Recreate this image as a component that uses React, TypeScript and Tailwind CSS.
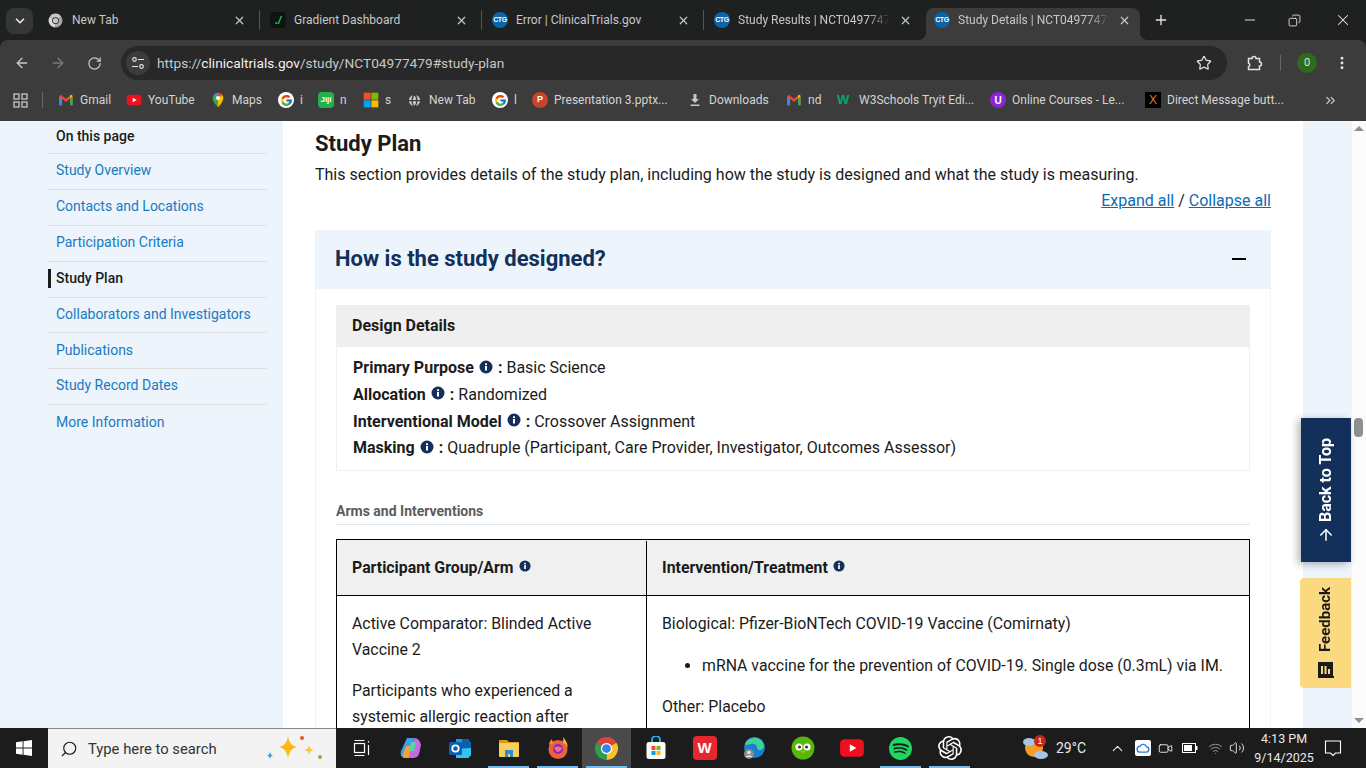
import {
  ArrowLeft,
  ArrowRight,
  ArrowUp,
  ChevronDown,
  ChevronUp,
  ChevronsRight,
  Copy,
  EllipsisVertical,
  Globe,
  Minus,
  Plus,
  RotateCw,
  Search,
  Star,
  Video,
  Volume2,
  Wifi,
  X,
} from "lucide-react";
import { FcGoogle } from "react-icons/fc";
import { SiOpenai, SiSpotify } from "react-icons/si";

const uiFont = "font-['Roboto',sans-serif]";

function ChromeLogo({ size = 24, mono = false }: { size?: number; mono?: boolean }) {
  return (
    <svg width={size} height={size} viewBox="0 0 24 24">
      <path d="M12 12 2.47 6.5A11 11 0 0 1 21.53 6.5Z" fill={mono ? "#c7c7c7" : "#db4437"} />
      <path d="M12 12 21.53 6.5A11 11 0 0 1 12 23Z" fill={mono ? "#a8a8a8" : "#fbc02d"} />
      <path d="M12 12 12 23A11 11 0 0 1 2.47 6.5Z" fill={mono ? "#d8d8d8" : "#2e9e4f"} />
      <circle cx="12" cy="12" r="5.4" fill={mono ? "#1f2020" : "#fff"} />
      <circle cx="12" cy="12" r="4.2" fill={mono ? "#c7c7c7" : "#3b82e6"} />
    </svg>
  );
}

function CtgIcon() {
  return (
    <span className="flex h-4 w-4 shrink-0 items-center justify-center rounded-full bg-[#0b64a8] font-['Liberation_Sans',sans-serif] text-[7px] font-bold tracking-tighter text-white">
      CTG
    </span>
  );
}

function GradientIcon() {
  return (
    <span className="flex h-4 w-4 shrink-0 items-center justify-center rounded-sm bg-[#0d1512] font-['Liberation_Sans',sans-serif] text-[11px] font-bold italic text-[#22c55e]">
      ./
    </span>
  );
}

function GmailIcon() {
  return (
    <svg width="16" height="16" viewBox="0 0 24 24">
      <path d="M2 6v14h4V10l6 5 6-5v10h4V6l-2-2-8 6-8-6Z" fill="#ea4335" />
      <path d="M2 6v14h4V10Z" fill="#4285f4" />
      <path d="M18 10v10h4V6Z" fill="#34a853" />
      <path d="M18 10l4-4-2-2-2 1.500Z" fill="#fbbc04" />
    </svg>
  );
}

function YoutubeIcon({ size = 16 }: { size?: number }) {
  return (
    <svg width={size} height={size} viewBox="0 0 24 24">
      <rect x="1" y="4" width="22" height="16" rx="4" fill="#f00f1f" />
      <path d="M10 8.500v7l6-3.500Z" fill="#fff" />
    </svg>
  );
}

function MapsIcon() {
  return (
    <svg width="16" height="16" viewBox="0 0 24 24">
      <path d="M12 1a8 8 0 0 0-8 8c0 6 8 14 8 14Z" fill="#34a853" />
      <path d="M12 1a8 8 0 0 1 8 8c0 6-8 14-8 14Z" fill="#fbbc04" />
      <path d="M6 3.500 12 9V1a8 8 0 0 0-6 2.500Z" fill="#4285f4" />
      <path d="M12 1a8 8 0 0 1 6.500 3.500L12 9Z" fill="#ea4335" />
      <circle cx="12" cy="9" r="3" fill="#fff" />
    </svg>
  );
}

function MsIcon({ size = 16 }: { size?: number }) {
  return (
    <svg width={size} height={size} viewBox="0 0 24 24">
      <rect x="1" y="1" width="10.500" height="10.500" fill="#f25022" />
      <rect x="12.500" y="1" width="10.500" height="10.500" fill="#7fba00" />
      <rect x="1" y="12.500" width="10.500" height="10.500" fill="#00a4ef" />
      <rect x="12.500" y="12.500" width="10.500" height="10.500" fill="#ffb900" />
    </svg>
  );
}

function GBadge() {
  return (
    <span className="flex h-4 w-4 items-center justify-center rounded-full bg-white">
      <FcGoogle size={13} />
    </span>
  );
}

const bookmarks = [
  { label: "Gmail", width: "w-[68px]", icon: <GmailIcon /> },
  { label: "YouTube", width: "w-[84px]", icon: <YoutubeIcon /> },
  { label: "Maps", width: "w-[68px]", icon: <MapsIcon /> },
  { label: "i", width: "w-[40px]", icon: <GBadge /> },
  {
    label: "n",
    width: "w-[45px]",
    icon: (
      <span className="flex h-4 w-4 items-center justify-center rounded-sm bg-[#22b14c] font-['Liberation_Sans',sans-serif] text-[8px] font-bold text-white">
        Jiji
      </span>
    ),
  },
  { label: "s", width: "w-[44px]", icon: <MsIcon /> },
  { label: "New Tab", width: "w-[85px]", icon: <Globe size={15} className="text-[#3c3c3c]" fill="#c7c7c7" /> },
  { label: "l", width: "w-[40px]", icon: <GBadge /> },
  {
    label: "Presentation 3.pptx...",
    width: "w-[155px]",
    icon: (
      <span className="flex h-4 w-4 items-center justify-center rounded-full bg-[#c8442a] font-['Liberation_Sans',sans-serif] text-[9px] font-bold text-white">
        P
      </span>
    ),
  },
  {
    label: "Downloads",
    width: "w-[99px]",
    icon: (
      <svg width="16" height="16" viewBox="0 0 16 16" fill="#c7c7c7">
        <path d="M6.500 2h3v5h2.500L8 11 4 7h2.500ZM3.500 12.500h9V14h-9Z" />
      </svg>
    ),
  },
  { label: "nd", width: "w-[51px]", icon: <GmailIcon /> },
  {
    label: "W3Schools Tryit Edi...",
    width: "w-[153px]",
    icon: <span className="w-4 font-['Liberation_Sans',sans-serif] text-[13px] font-bold text-[#04aa6d]">W</span>,
  },
  {
    label: "Online Courses - Le...",
    width: "w-[155px]",
    icon: (
      <span className="flex h-4 w-4 items-center justify-center rounded-full bg-[#8b25d6] font-['Liberation_Sans',sans-serif] text-[10px] font-bold text-white">
        U
      </span>
    ),
  },
  {
    label: "Direct Message butt...",
    width: "w-[160px]",
    icon: (
      <span className="flex h-4 w-4 items-center justify-center bg-black font-['Liberation_Sans',sans-serif] text-[12px] text-[#e07a1f]">
        X
      </span>
    ),
  },
];

const sections = [
  "Study Overview",
  "Contacts and Locations",
  "Participation Criteria",
  "Study Plan",
  "Collaborators and Investigators",
  "Publications",
  "Study Record Dates",
  "More Information",
];

const designRows = [
  { label: "Primary Purpose", value: "Basic Science" },
  { label: "Allocation", value: "Randomized" },
  { label: "Interventional Model", value: "Crossover Assignment" },
  { label: "Masking", value: "Quadruple (Participant, Care Provider, Investigator, Outcomes Assessor)" },
];

function InfoIcon({ size = 14 }: { size?: number }) {
  return (
    <svg width={size} height={size} viewBox="0 0 14 14" className="shrink-0">
      <circle cx="7" cy="7" r="6.500" fill="#12305a" />
      <rect x="6" y="6" width="2" height="4.500" fill="#fff" />
      <rect x="6" y="3.300" width="2" height="1.800" fill="#fff" />
    </svg>
  );
}

function Tab({ title, icon, active, fade }: { title: string; icon: React.ReactNode; active?: boolean; fade?: boolean }) {
  return (
    <div
      className={
        active
          ? "relative flex h-[32px] w-[214px] items-center rounded-t-lg bg-[#3c3c3c] pb-2 pl-2 pr-[9px]"
          : "flex h-[32px] w-[221px] items-center pb-2 pl-[10px] pr-[13px]"
      }
    >
      {active ? (
        <>
          <span className="absolute bottom-0 left-[-8px] h-2 w-2 bg-[radial-gradient(circle_at_0_0,transparent_8px,#3c3c3c_8px)]" />
          <span className="absolute bottom-0 right-[-8px] h-2 w-2 bg-[radial-gradient(circle_at_100%_0,transparent_8px,#3c3c3c_8px)]" />
        </>
      ) : null}
      <span className="flex w-6 shrink-0 items-center">{icon}</span>
      <span
        className={
          fade
            ? "w-[152px] overflow-hidden whitespace-nowrap text-xs text-[#c7c7c7] [mask-image:linear-gradient(90deg,#000_85%,transparent)]"
            : "w-[152px] overflow-hidden whitespace-nowrap text-xs text-[#c7c7c7]"
        }
      >
        {title}
      </span>
      <X size={13} strokeWidth={2.2} className="ml-auto text-[#c7c7c7]" />
    </div>
  );
}

function TabStrip() {
  return (
    <div className="flex h-[40px] items-end bg-[#1f2020]">
      <div className="mb-[6px] ml-[6px] mr-[5px] flex h-[26px] w-[27px] items-center justify-center rounded-lg bg-[#353636]">
        <ChevronDown size={14} strokeWidth={3} className="text-[#e3e3e3]" />
      </div>
      <Tab title="New Tab" icon={<ChromeLogo size={15} mono />} />
      <div className="mb-[10px] h-5 w-px shrink-0 bg-[#555]" />
      <Tab title="Gradient Dashboard" icon={<GradientIcon />} />
      <div className="mb-[10px] h-5 w-px shrink-0 bg-[#555]" />
      <Tab title="Error | ClinicalTrials.gov" icon={<CtgIcon />} />
      <div className="mb-[10px] h-5 w-px shrink-0 bg-[#555]" />
      <Tab title="Study Results | NCT04977479" icon={<CtgIcon />} fade />
      <div className="w-px shrink-0" />
      <Tab title="Study Details | NCT04977479" icon={<CtgIcon />} active fade />
      <Plus size={16} strokeWidth={2} className="mb-[12px] ml-[13px] text-[#e3e3e3]" />
      <div className="ml-auto mb-[11px] flex items-center text-[#e8e8e8]">
        <Minus size={16} strokeWidth={1.4} className="mr-[30px]" />
        <Copy size={13} strokeWidth={1.6} className="mr-[33px] -scale-x-100" />
        <X size={18} strokeWidth={1.4} className="mr-[14px]" />
      </div>
    </div>
  );
}

function Toolbar() {
  return (
    <div className="flex h-[40px] items-center rounded-t-lg bg-[#3c3c3c] pt-[6px]">
      <ArrowLeft size={16} className="ml-[14px] text-[#c7c7c7]" />
      <ArrowRight size={16} className="ml-[20px] text-[#7a7a7a]" />
      <RotateCw size={15} className="ml-[21px] text-[#c7c7c7]" />
      <div className="ml-[19px] flex h-[34px] w-[1106px] items-center rounded-full bg-[#282828] pl-[5px]">
        <span className="flex h-6 w-6 items-center justify-center rounded-full bg-[#3c3c3c]">
          <svg width="14" height="14" viewBox="0 0 14 14" fill="none" stroke="#e3e3e3" strokeWidth="1.200">
            <circle cx="3.500" cy="3.500" r="1.800" />
            <path d="M7 3.500h6M1 10.500h6" />
            <circle cx="10.500" cy="10.500" r="1.800" />
          </svg>
        </span>
        <span className="ml-[7px] text-[13.700px] text-[#c7c7c7]">
          https://<span className="text-[#f1f1f1]">clinicaltrials.gov</span>/study/NCT04977479#study-plan
        </span>
        <Star size={16} strokeWidth={1.8} className="ml-auto mr-[15px] text-[#e3e3e3]" />
      </div>
      <svg width="18" height="18" viewBox="0 0 18 18" fill="none" stroke="#e3e3e3" strokeWidth="1.500" className="ml-[19px]">
        <path d="M2.500 4.500h3.500a2 2 0 0 1 4 0h3.500V8a2 2 0 0 1 0 4v3.500H2.500v-2.700a1.900 1.900 0 0 0 0-3.600Z" />
      </svg>
      <div className="ml-[16px] h-[16px] w-px bg-[#666]" />
      <span className="ml-[16px] flex h-5 w-5 items-center justify-center rounded-full bg-[#2f6b1f] text-[11px] text-[#d8e8d0]">
        0
      </span>
      <EllipsisVertical size={16} strokeWidth={2.4} className="ml-[17px] text-[#e3e3e3]" />
    </div>
  );
}

function BookmarksBar() {
  return (
    <div className="flex h-[41px] items-center bg-[#3c3c3c] pb-[1px]">
      <svg width="15" height="15" viewBox="0 0 15 15" fill="none" stroke="#c7c7c7" strokeWidth="1.300" className="ml-[13px]">
        <rect x="1" y="1" width="5" height="5" />
        <rect x="9" y="1" width="5" height="5" />
        <rect x="1" y="9" width="5" height="5" />
        <rect x="9" y="9" width="5" height="5" />
      </svg>
      <div className="ml-[14px] mr-[15px] h-[16px] w-px bg-[#666]" />
      {bookmarks.map((bookmark) => (
        <div className={`flex shrink-0 items-center ${bookmark.width}`} key={bookmark.label + bookmark.width}>
          <span className="flex w-[22px] shrink-0 items-center">{bookmark.icon}</span>
          <span className="whitespace-nowrap text-xs text-[#d4d4d4]">{bookmark.label}</span>
        </div>
      ))}
      <ChevronsRight size={15} className="ml-[18px] text-[#c7c7c7]" />
    </div>
  );
}

function Sidebar() {
  return (
    <aside className="w-[283px] shrink-0 bg-[#edf4fb] pl-[48px] pr-[16px] text-sm">
      <div className="flex h-[33px] items-end border-b border-[#dcdee0] pb-[7px] pl-2 font-medium text-[#1b1b1b]">
        On this page
      </div>
      {sections.map((section, index) => (
        <div
          className={
            index === sections.length - 1
              ? "flex h-[35.700px] items-center pb-[3px] pl-2 text-[#1a7ac0]"
              : section === "Study Plan"
                ? "flex h-[35.900px] items-center border-b border-[#dcdee0] pb-[2px] font-medium text-[#1b1b1b]"
                : section === "Study Record Dates"
                  ? "flex h-[35.900px] items-center border-b border-[#dcdee0] pb-[3px] pl-2 text-[#1a7ac0]"
                  : "flex h-[35.900px] items-center border-b border-[#dcdee0] pb-[2px] pl-2 text-[#1a7ac0]"
          }
          key={section}
        >
          {section === "Study Plan" ? <span className="mr-[5px] h-[19px] w-[3px] bg-[#1b1b1b]" /> : null}
          {section}
        </div>
      ))}
    </aside>
  );
}

function DesignDetails() {
  return (
    <div className="border border-[#efefef]">
      <div className="-m-px flex h-[42px] items-center bg-[#efefef] pl-[16px] font-bold text-[#1b1b1b]">
        Design Details
      </div>
      <div className="px-[16px] pb-[7.800px] pt-[9.200px] leading-[26.700px] text-[#1b1b1b]">
        {designRows.map((row) => (
          <div className="flex items-center" key={row.label}>
            <b className="font-bold">{row.label}</b>
            <span className="ml-[5px] mt-[-4px]">
              <InfoIcon />
            </span>
            <b className="ml-[5px] mr-[4px] font-bold">:</b>
            {row.value}
          </div>
        ))}
      </div>
    </div>
  );
}

function ArmsTable() {
  return (
    <div className="mt-[14px] border border-black text-[15.850px] text-[#1b1b1b]">
      <div className="flex h-[56px] border-b border-black bg-[#f0f0f0] pt-[1px] font-bold">
        <div className="flex w-[310px] items-center gap-[5px] border-r border-black pl-[15px]">
          Participant Group/Arm
          <span className="mt-[-4px]">
            <InfoIcon size={12} />
          </span>
        </div>
        <div className="flex items-center gap-[5px] pl-[15px]">
          Intervention/Treatment
          <span className="mt-[-4px]">
            <InfoIcon size={12} />
          </span>
        </div>
      </div>
      <div className="flex leading-[26px]">
        <div className="w-[310px] border-r border-black px-[15px] pb-5 pt-[15px]">
          <p>Active Comparator: Blinded Active Vaccine 2</p>
          <p className="mt-[15px]">Participants who experienced a systemic allergic reaction after</p>
        </div>
        <div className="flex-1 px-[15px] pb-5 pt-[15px]">
          <p>Biological: Pfizer-BioNTech COVID-19 Vaccine (Comirnaty)</p>
          <ul className="mt-[16px] list-disc pl-[40px]">
            <li>mRNA vaccine for the prevention of COVID-19. Single dose (0.3mL) via IM.</li>
          </ul>
          <p className="mt-[15px]">Other: Placebo</p>
        </div>
      </div>
    </div>
  );
}

function MainPanel() {
  return (
    <main className="w-[1020px] shrink-0 bg-white px-[32px] pt-[9px] font-['Roboto',sans-serif]">
      <h2 className="text-[22px] font-bold leading-[28px] text-[#1b1b1b]">Study Plan</h2>
      <p className="mt-[5px] leading-[24px] text-[#1b1b1b]">
        This section provides details of the study plan, including how the study is designed and what the study is
        measuring.
      </p>
      <p className="mt-[2px] text-right leading-[24px] text-[#1b1b1b]">
        <span className="text-[#0b6cb4] underline">Expand all</span> /{" "}
        <span className="text-[#0b6cb4] underline">Collapse all</span>
      </p>
      <section className="mt-[17px] border-x border-[#edf4fb] px-[20px] pb-[40px]">
        <div className="-mx-[21px] flex h-[59px] items-center justify-between bg-[#edf4fb] pb-[1px] pl-[20px] pr-[25px]">
          <h3 className="pb-[1px] text-[22px] font-bold text-[#12305a]">How is the study designed?</h3>
          <span className="h-[2px] w-[14px] bg-black" />
        </div>
        <div className="mt-[16px]">
          <DesignDetails />
        </div>
        <h4 className="mt-[31px] border-b border-[#dfe8ef] pb-[4px] text-sm font-bold leading-[18px] text-[#5c5c5c]">
          Arms and Interventions
        </h4>
        <ArmsTable />
      </section>
    </main>
  );
}

function PageScrollbar() {
  return (
    <div className="flex w-[14px] shrink-0 flex-col items-center justify-between bg-[#fbfbfb] py-[5px]">
      <span className="h-0 w-0 border-x-[5px] border-b-[5px] border-x-transparent border-b-[#8f8f8f]" />
      <span className="h-0 w-0 border-x-[5px] border-t-[5px] border-x-transparent border-t-[#8f8f8f]" />
    </div>
  );
}

function FloatingButtons() {
  return (
    <>
      <div className="absolute left-[1354px] top-[297px] h-[19px] w-[9px] rounded-[4px] bg-[#8f8f8f]" />
      <div className="absolute left-[1301px] top-[297px] flex h-[144px] w-[50px] flex-col items-center justify-center gap-[4px] bg-[#12305a] pt-[2px] font-bold text-white shadow-[-3px_2px_8px_rgba(0,0,0,0.3)]">
        <span className="rotate-180 [writing-mode:vertical-rl]">Back to Top</span>
        <ArrowUp size={18} strokeWidth={2} />
      </div>
      <div className="absolute left-[1300px] top-[457px] flex h-[110px] w-[51px] flex-col items-center justify-center gap-[8px] rounded-l-[4px] bg-[#fad980] text-[15px] font-bold text-[#1b1b1b]">
        <span className="rotate-180 [writing-mode:vertical-rl]">Feedback</span>
        <svg width="18" height="18" viewBox="0 0 18 18">
          <path d="M1 1h15v14h1v2H1Z" fill="#1b1b1b" />
          <path d="M4 5h2v8H4ZM7.500 5h2v8h-2ZM11 8h2v5h-2Z" fill="#fad980" />
        </svg>
      </div>
    </>
  );
}

function WindowsLogo() {
  return (
    <svg width="16" height="16" viewBox="0 0 16 16">
      <path d="M0 2.200 6.600 1.300V7.500H0ZM7.500 1.200 16 0V7.500H7.500ZM0 8.500H6.600V14.700L0 13.800ZM7.500 8.500H16V16L7.500 14.800Z" fill="#fff" />
    </svg>
  );
}

function Sparkles() {
  return (
    <svg width="62" height="30" viewBox="0 0 62 30" className="ml-auto mr-[10px]">
      <path d="M24 2c1 7 4 10 9 11-5 1-8 4-9 12-1-8-4-11-9-12 5-1 8-4 9-11Z" fill="#fdb913" />
      <path d="M45 11c.5 3 2 4.500 5 5-3 .5-4.500 2-5 5-.5-3-2-4.500-5-5 3-.5 4.500-2 5-5Z" fill="#fdc93b" />
      <path d="M6 18c.5 2 1 3 3 3.500-2 .5-2.500 1.500-3 3.500-.5-2-1-3-3-3.500 2-.5 2.500-1.500 3-3.500Z" fill="#2b9fea" />
      <circle cx="38" cy="4" r="2" fill="#e8562a" />
      <circle cx="56" cy="23" r="2" fill="#7cb342" />
    </svg>
  );
}

const taskIcons = [
  {
    key: "taskview",
    icon: (
      <svg width="18" height="18" viewBox="0 0 18 18" fill="none" stroke="#fff" strokeWidth="1.200">
        <rect x="1.500" y="4.500" width="10" height="9" />
        <path d="M1.500 1.500h10M1.500 16.500h10M15.500 2v1.500M15.500 6v10" />
      </svg>
    ),
  },
  {
    key: "copilot",
    icon: (
      <svg width="24" height="24" viewBox="0 0 24 24">
        <path d="M8 2h7l-5 20H6C2 22 1 18 2 15Z" fill="#3aa0e8" />
        <path d="M15 2c4 0 6 3 7 7l-2 9c-1 3-4 4-6 4h-4Z" fill="#c76be0" />
        <path d="M7 10h6l-3 12H6c-2 0-3-2-2-4Z" fill="#f4a13b" />
        <path d="M12 6h5l-2 9h-5Z" fill="#5ed1a0" />
      </svg>
    ),
  },
  {
    key: "outlook",
    icon: (
      <svg width="24" height="24" viewBox="0 0 24 24">
        <path d="M8 3h12l3 4v12l-3 3H8Z" fill="#1a9ae0" />
        <path d="M14 3h6l3 4v5h-9Z" fill="#0f5ea8" />
        <path d="M8 14l15-2v7l-3 3H8Z" fill="#32c4ee" />
        <rect x="1" y="6" width="13" height="13" rx="1.500" fill="#0a5fb0" />
        <circle cx="7.500" cy="12.500" r="3.200" fill="none" stroke="#fff" strokeWidth="1.800" />
      </svg>
    ),
  },
  {
    key: "explorer",
    underline: true,
    icon: (
      <svg width="24" height="24" viewBox="0 0 24 24">
        <path d="M2 4h8l2 2h10v4H2Z" fill="#d79a1c" />
        <rect x="2" y="7" width="20" height="14" rx="1" fill="#f7cf5c" />
        <path d="M8 14h8v7h-3v-3h-2v3H8Z" fill="#2a8ed6" />
      </svg>
    ),
  },
  {
    key: "firefox",
    underline: true,
    icon: (
      <svg width="24" height="24" viewBox="0 0 24 24">
        <circle cx="12" cy="13.500" r="9.500" fill="#f2603a" />
        <path d="M17 1c3 3 5 7 4.500 11-1-3-3-5-5-6 1-1 1-3 .500-5Z" fill="#fdb32a" />
        <path d="M3 9c0-3 2-5 3-6 0 2 1 3 2 4Z" fill="#ff8a2a" />
        <circle cx="12" cy="13" r="5" fill="#7a2fc4" />
        <path d="M8 12c2-2 6-2 8 0-1 3-3 4-5 4Z" fill="#f76b8a" />
      </svg>
    ),
  },
  { key: "chrome", active: true, underline: true, icon: <ChromeLogo size={25} /> },
  {
    key: "store",
    icon: (
      <svg width="24" height="24" viewBox="0 0 24 24">
        <path d="M8 6V4a4 4 0 0 1 8 0v2" fill="none" stroke="#2ab4e8" strokeWidth="1.800" />
        <rect x="2.500" y="6" width="19" height="17" rx="2.500" fill="#fafafa" />
        <rect x="7.500" y="10" width="4" height="4" fill="#f25022" />
        <rect x="12.500" y="10" width="4" height="4" fill="#7fba00" />
        <rect x="7.500" y="15" width="4" height="4" fill="#00a4ef" />
        <rect x="12.500" y="15" width="4" height="4" fill="#ffb900" />
      </svg>
    ),
  },
  {
    key: "wps",
    icon: (
      <span className="flex h-6 w-6 items-center justify-center rounded-[4px] bg-[#e8262f] font-['Liberation_Sans',sans-serif] text-[15px] font-bold text-white">
        W
      </span>
    ),
  },
  {
    key: "edge",
    icon: (
      <svg width="24" height="24" viewBox="0 0 24 24">
        <circle cx="12.500" cy="11.500" r="10.500" fill="#1b7fd0" />
        <path d="M3 8c3-7 14-9 18-1 2 4 0 7-3 7-3 0-3-2-3-3 0-2-3-4-6-3-3 .5-5 2-6 0Z" fill="#41d19a" />
        <circle cx="7" cy="18" r="5" fill="#8d8d8d" />
        <circle cx="7" cy="16.500" r="1.800" fill="#e5e5e5" />
        <path d="M3.500 21c.5-2 6.500-2 7 0Z" fill="#e5e5e5" />
      </svg>
    ),
  },
  {
    key: "duolingo",
    icon: (
      <svg width="24" height="24" viewBox="0 0 24 24">
        <circle cx="12" cy="12" r="11.500" fill="#58b80a" />
        <circle cx="8" cy="11" r="3.600" fill="#fff" />
        <circle cx="16" cy="11" r="3.600" fill="#fff" />
        <circle cx="8.500" cy="11" r="1.600" fill="#5a3a17" />
        <circle cx="15.500" cy="11" r="1.600" fill="#5a3a17" />
        <path d="M10 15h4l-2 2.500Z" fill="#f6a81c" />
      </svg>
    ),
  },
  { key: "youtube", icon: <YoutubeIcon size={26} /> },
  {
    key: "spotify",
    underline: true,
    icon: <SiSpotify size={23} className="text-[#1ed760]" />,
  },
  {
    key: "chatgpt",
    underline: true,
    icon: <SiOpenai size={24} className="text-white" />,
  },
];

function Taskbar() {
  return (
    <div className={`flex h-[40px] items-stretch bg-[#1c1c1c] ${uiFont}`}>
      <div className="flex w-[48px] items-center justify-center">
        <WindowsLogo />
      </div>
      <div className="flex w-[288px] items-center border-t border-[#8a8a8a] bg-[#f3f3f3] pl-[12px]">
        <Search size={18} strokeWidth={1.5} className="-scale-x-100 text-[#1b1b1b]" />
        <span className="ml-[10px] pt-[1px] text-[14.800px] text-[#333]">Type here to search</span>
        <Sparkles />
      </div>
      <div className="ml-[1px] flex">
        {taskIcons.map((item) => (
          <div
            className={
              item.active
                ? "relative flex w-[49px] items-center justify-center bg-[#4a4a4a]"
                : "relative flex w-[49px] items-center justify-center"
            }
            key={item.key}
          >
            {item.icon}
            {item.underline ? (
              <span className="absolute bottom-0 left-[4px] right-[4px] h-[2px] bg-[#76b9ed]" />
            ) : null}
          </div>
        ))}
      </div>
      <div className="ml-[49px] flex items-center text-[#e8e8e8]">
        <svg width="26" height="28" viewBox="0 0 26 28">
          <circle cx="11" cy="14" r="9" fill="#f59c2a" />
          <ellipse cx="6" cy="8" rx="6" ry="4" fill="#a8c4e4" />
          <ellipse cx="18" cy="21" rx="7" ry="4" fill="#a8c4e4" />
          <circle cx="17" cy="7" r="6" fill="#c8261d" />
          <text x="17" y="10" fontSize="9" fill="#fff" textAnchor="middle" fontFamily="Liberation Sans">
            1
          </text>
        </svg>
        <span className="ml-[7px] text-sm">29°C</span>
        <ChevronUp size={17} strokeWidth={1.6} className="ml-[23px]" />
        <span className="ml-[9px] flex h-4 w-4 items-center justify-center rounded-[2px] bg-white">
          <svg width="14" height="14" viewBox="0 0 24 24" fill="none" stroke="#2f7de1" strokeWidth="2.400">
            <path d="M7 19a5 5 0 0 1 0-10 6 6 0 0 1 11 1 4.500 4.500 0 0 1-1 9Z" />
          </svg>
        </span>
        <Video size={15} strokeWidth={1.5} className="ml-[7px]" />
        <svg width="16" height="10" viewBox="0 0 16 10" className="ml-[9px]">
          <rect x=".5" y=".5" width="13" height="9" fill="none" stroke="#fff" />
          <rect x="2" y="2" width="8" height="6" fill="#fff" />
          <rect x="14" y="3" width="1.500" height="4" fill="#fff" />
        </svg>
        <Wifi size={15} strokeWidth={1.5} className="ml-[10px] text-[#9a9a9a]" />
        <Volume2 size={16} strokeWidth={1.4} className="ml-[6px]" />
        <div className="ml-[9px] flex w-[60px] flex-col items-center text-[12.500px] leading-[19px]">
          <span>4:13 PM</span>
          <span>9/14/2025</span>
        </div>
        <svg width="18" height="18" viewBox="0 0 18 18" fill="none" stroke="#fff" strokeWidth="1.100" className="ml-[10px]">
          <path d="M1.500 2h15v12h-5l-2.500 2.500L6.500 14h-5Z" />
        </svg>
      </div>
    </div>
  );
}

export default function App() {
  return (
    <div className="flex h-screen w-[1366px] flex-col overflow-hidden bg-[#1f2020]">
      <div className={uiFont}>
        <TabStrip />
        <Toolbar />
        <BookmarksBar />
      </div>
      <div className="relative flex min-h-0 flex-1 overflow-hidden font-['Roboto',sans-serif]">
        <Sidebar />
        <MainPanel />
        <div className="w-[49px] shrink-0 bg-[#edf4fb]" />
        <PageScrollbar />
        <FloatingButtons />
      </div>
      <Taskbar />
    </div>
  );
}
